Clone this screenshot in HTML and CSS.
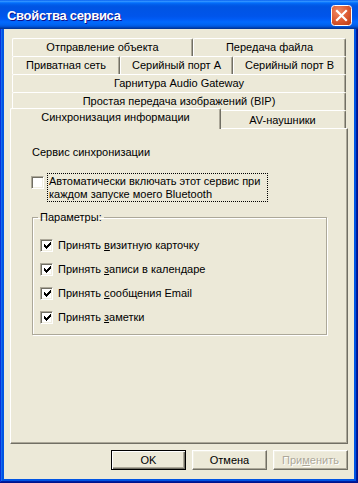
FILE: index.html
```html
<!DOCTYPE html>
<html lang="ru">
<head>
  <meta charset="UTF-8" />
  <title>Свойства сервиса</title>
  <link rel="stylesheet" href="styles.css">
</head>
<body>

  <div class="window">
    <div class="titlebar">
      <span class="title">Свойства сервиса</span>
      <svg class="close" width="21" height="21" viewBox="0 0 21 21">
        <defs>
          <radialGradient id="closeFill" cx="0.35" cy="0.3" r="0.8">
            <stop offset="0" stop-color="#f08a66"/>
            <stop offset="0.6" stop-color="#dc5a32"/>
            <stop offset="1" stop-color="#c2421a"/>
          </radialGradient>
        </defs>
        <rect x="0.5" y="0.5" width="20" height="20" rx="3" fill="url(#closeFill)" stroke="#ffffff"/>
        <path d="M6 6 L15 15 M15 6 L6 15" stroke="#ffffff" stroke-width="2.2" stroke-linecap="square" fill="none"/>
      </svg>
    </div>

    <div class="client">
      <!-- ВКЛАДКИ -->
      <div class="tabs">
        <div class="tab-row">
          <div class="tab w-obj">Отправление объекта</div>
          <div class="tab w-file">Передача файла</div>
        </div>
        <div class="tab-row">
          <div class="tab w-net">Приватная сеть</div>
          <div class="tab w-port">Серийный порт А</div>
          <div class="tab w-port">Серийный порт В</div>
        </div>
        <div class="tab-row">
          <div class="tab w-full">Гарнитура Audio Gateway</div>
        </div>
        <div class="tab-row">
          <div class="tab w-full">Простая передача изображений (BIP)</div>
        </div>
        <div class="tab-row">
          <div class="tab w-sync active">Синхронизация информации</div>
          <div class="tab w-av">AV-наушники</div>
        </div>
      </div>

      <div class="panel">
        <div class="caption">Сервис синхронизации</div>

        <div class="auto-row">
          <span class="cb"></span>
          <span class="focus">Автоматически включать этот сервис при<br>каждом запуске моего Bluetooth</span>
        </div>

        <fieldset class="group">
          <legend>Параметры:</legend>
          <div class="opt">
            <span class="cb"><svg class="tick" width="7" height="7" viewBox="0 0 7 7"><path d="M6 0h1v1h-1z M5 1h2v1h-2z M0 2h1v1h-1z M4 2h3v1h-3z M0 3h2v1h-2z M3 3h3v1h-3z M0 4h5v1h-5z M1 5h3v1h-3z M2 6h1v1h-1z"/></svg></span>
            <span>Принять <u>в</u>изитную карточку</span>
          </div>
          <div class="opt">
            <span class="cb"><svg class="tick" width="7" height="7" viewBox="0 0 7 7"><path d="M6 0h1v1h-1z M5 1h2v1h-2z M0 2h1v1h-1z M4 2h3v1h-3z M0 3h2v1h-2z M3 3h3v1h-3z M0 4h5v1h-5z M1 5h3v1h-3z M2 6h1v1h-1z"/></svg></span>
            <span>Принять <u>з</u>аписи в календаре</span>
          </div>
          <div class="opt">
            <span class="cb"><svg class="tick" width="7" height="7" viewBox="0 0 7 7"><path d="M6 0h1v1h-1z M5 1h2v1h-2z M0 2h1v1h-1z M4 2h3v1h-3z M0 3h2v1h-2z M3 3h3v1h-3z M0 4h5v1h-5z M1 5h3v1h-3z M2 6h1v1h-1z"/></svg></span>
            <span>Принять <u>с</u>ообщения Email</span>
          </div>
          <div class="opt">
            <span class="cb"><svg class="tick" width="7" height="7" viewBox="0 0 7 7"><path d="M6 0h1v1h-1z M5 1h2v1h-2z M0 2h1v1h-1z M4 2h3v1h-3z M0 3h2v1h-2z M3 3h3v1h-3z M0 4h5v1h-5z M1 5h3v1h-3z M2 6h1v1h-1z"/></svg></span>
            <span>Принять <u>з</u>аметки</span>
          </div>
        </fieldset>
      </div>

      <div class="buttons">
        <div class="btn default">OK</div>
        <div class="btn">Отмена</div>
        <div class="btn disabled">При<u>м</u>енить</div>
      </div>
    </div>
  </div>

</body>
</html>
```

FILE: styles.css
```css
body {
  margin: 0;
  font-family: 'Liberation Sans', Arial, sans-serif;
  font-size: 11px;
  color: #000;
  background: #fff;
}

.window {
  width: 358px;
  height: 483px;
  display: flex;
  flex-direction: column;
  background: #0054e3;
  box-sizing: border-box;
  box-shadow: inset -1px -1px #00138c, inset 1px 0 #0831d9, inset -2px -2px #001ea0, inset 2px 0 #166aee;
}

/* заголовок окна */
.titlebar {
  height: 29px;
  flex: none;
  display: flex;
  align-items: center;
  justify-content: space-between;
  padding: 1px 6px 0 7px;
  box-sizing: border-box;
  background: linear-gradient(to bottom, #0058ee 0%, #3593ff 4%, #288eff 6%, #127dff 8%, #036ffc 10%, #0262ee 14%, #0057e5 20%, #0054e3 24%, #0055eb 56%, #005bf5 66%, #026afe 76%, #0062ef 86%, #0052d6 92%, #0040ab 96%, #003092 100%);
}

.title {
  color: #fff;
  font-weight: bold;
  font-size: 13px;
  letter-spacing: -0.3px;
  text-shadow: 1px 1px #0f1089;
}

.close {
  flex: none;
  display: block;
}

.client {
  flex: 1;
  margin: 0 4px 4px;
  background: #ece9d8;
  padding-top: 9px;
  display: flex;
  flex-direction: column;
}

/* вкладки */
.tabs {
  margin: 0 8px;
}

.tab-row {
  display: flex;
  height: 18px;
}

.tab {
  position: relative;
  height: 18px;
  box-sizing: border-box;
  border-top: 1px solid #fff;
  border-left: 1px solid #fff;
  border-right: 1px solid #716f64;
  border-radius: 2px 2px 0 0;
  box-shadow: inset -1px 0 #aca899;
  background: #ece9d8;
  text-align: center;
  line-height: 17px;
  white-space: nowrap;
}

.w-obj { width: 181px; }
.w-file { width: 153px; }
.w-net { width: 108px; }
.w-port { width: 113px; }
.w-full { width: 334px; }
.w-sync { width: 207px; }
.w-av { width: 127px; line-height: 18px; }

.tab.active {
  z-index: 2;
  height: 21px;
  margin: -2px -2px -1px -2px;
  width: 211px;
  line-height: 16px;
}

/* панель */
.panel {
  margin: 0 6px;
  height: 316px;
  box-sizing: border-box;
  border-top: 1px solid #fff;
  border-left: 1px solid #fff;
  border-right: 1px solid #716f64;
  border-bottom: 1px solid #716f64;
  box-shadow: inset -1px -1px #aca899;
  padding: 17px 0 0 21px;
}

.caption {
  line-height: 13px;
}

.auto-row {
  display: flex;
  align-items: flex-start;
  margin-top: 14px;
  margin-left: -1px;
}

.auto-row .cb {
  margin-top: 3px;
  margin-right: 3px;
}

.focus {
  border: 1px dotted #000;
  padding: 1px 1px 0 1px;
  line-height: 13px;
  width: 217px;
}

.cb {
  flex: none;
  width: 13px;
  height: 13px;
  box-sizing: border-box;
  border: 1px solid;
  border-color: #aca899 #fff #fff #aca899;
  box-shadow: inset 1px 1px #716f64, inset -1px -1px #f1efe2;
  background: #fff;
  display: flex;
  align-items: center;
  justify-content: center;
}

.tick {
  shape-rendering: crispEdges;
  margin: 1px 0 0 1px;
}

/* группа параметров */
.group {
  margin: 9px 0 0 0;
  width: 295px;
  height: 124px;
  box-sizing: border-box;
  border: 1px solid #aca899;
  box-shadow: 1px 1px 0 #fff, inset 1px 1px 0 #fff;
  padding: 9px 0 0 7px;
}

.group legend {
  padding: 0 2px;
  margin-left: -2px;
  line-height: 13px;
}

.opt {
  display: flex;
  align-items: center;
  height: 24px;
  gap: 5px;
}

/* кнопки */
.buttons {
  display: flex;
  justify-content: flex-end;
  gap: 6px;
  margin: 6px 6px 0 0;
}

.btn {
  width: 75px;
  height: 20px;
  box-sizing: border-box;
  border: 1px solid;
  border-color: #fff #716f64 #716f64 #fff;
  box-shadow: inset -1px -1px #aca899, inset 1px 1px #f1efe2;
  text-align: center;
  line-height: 18px;
}

.btn.default {
  border-color: #000;
  box-shadow: inset 1px 1px #fff, inset -1px -1px #716f64, inset -2px -2px #aca899;
}

.btn.disabled {
  color: #aca899;
  text-shadow: 1px 1px #fff;
}
```
